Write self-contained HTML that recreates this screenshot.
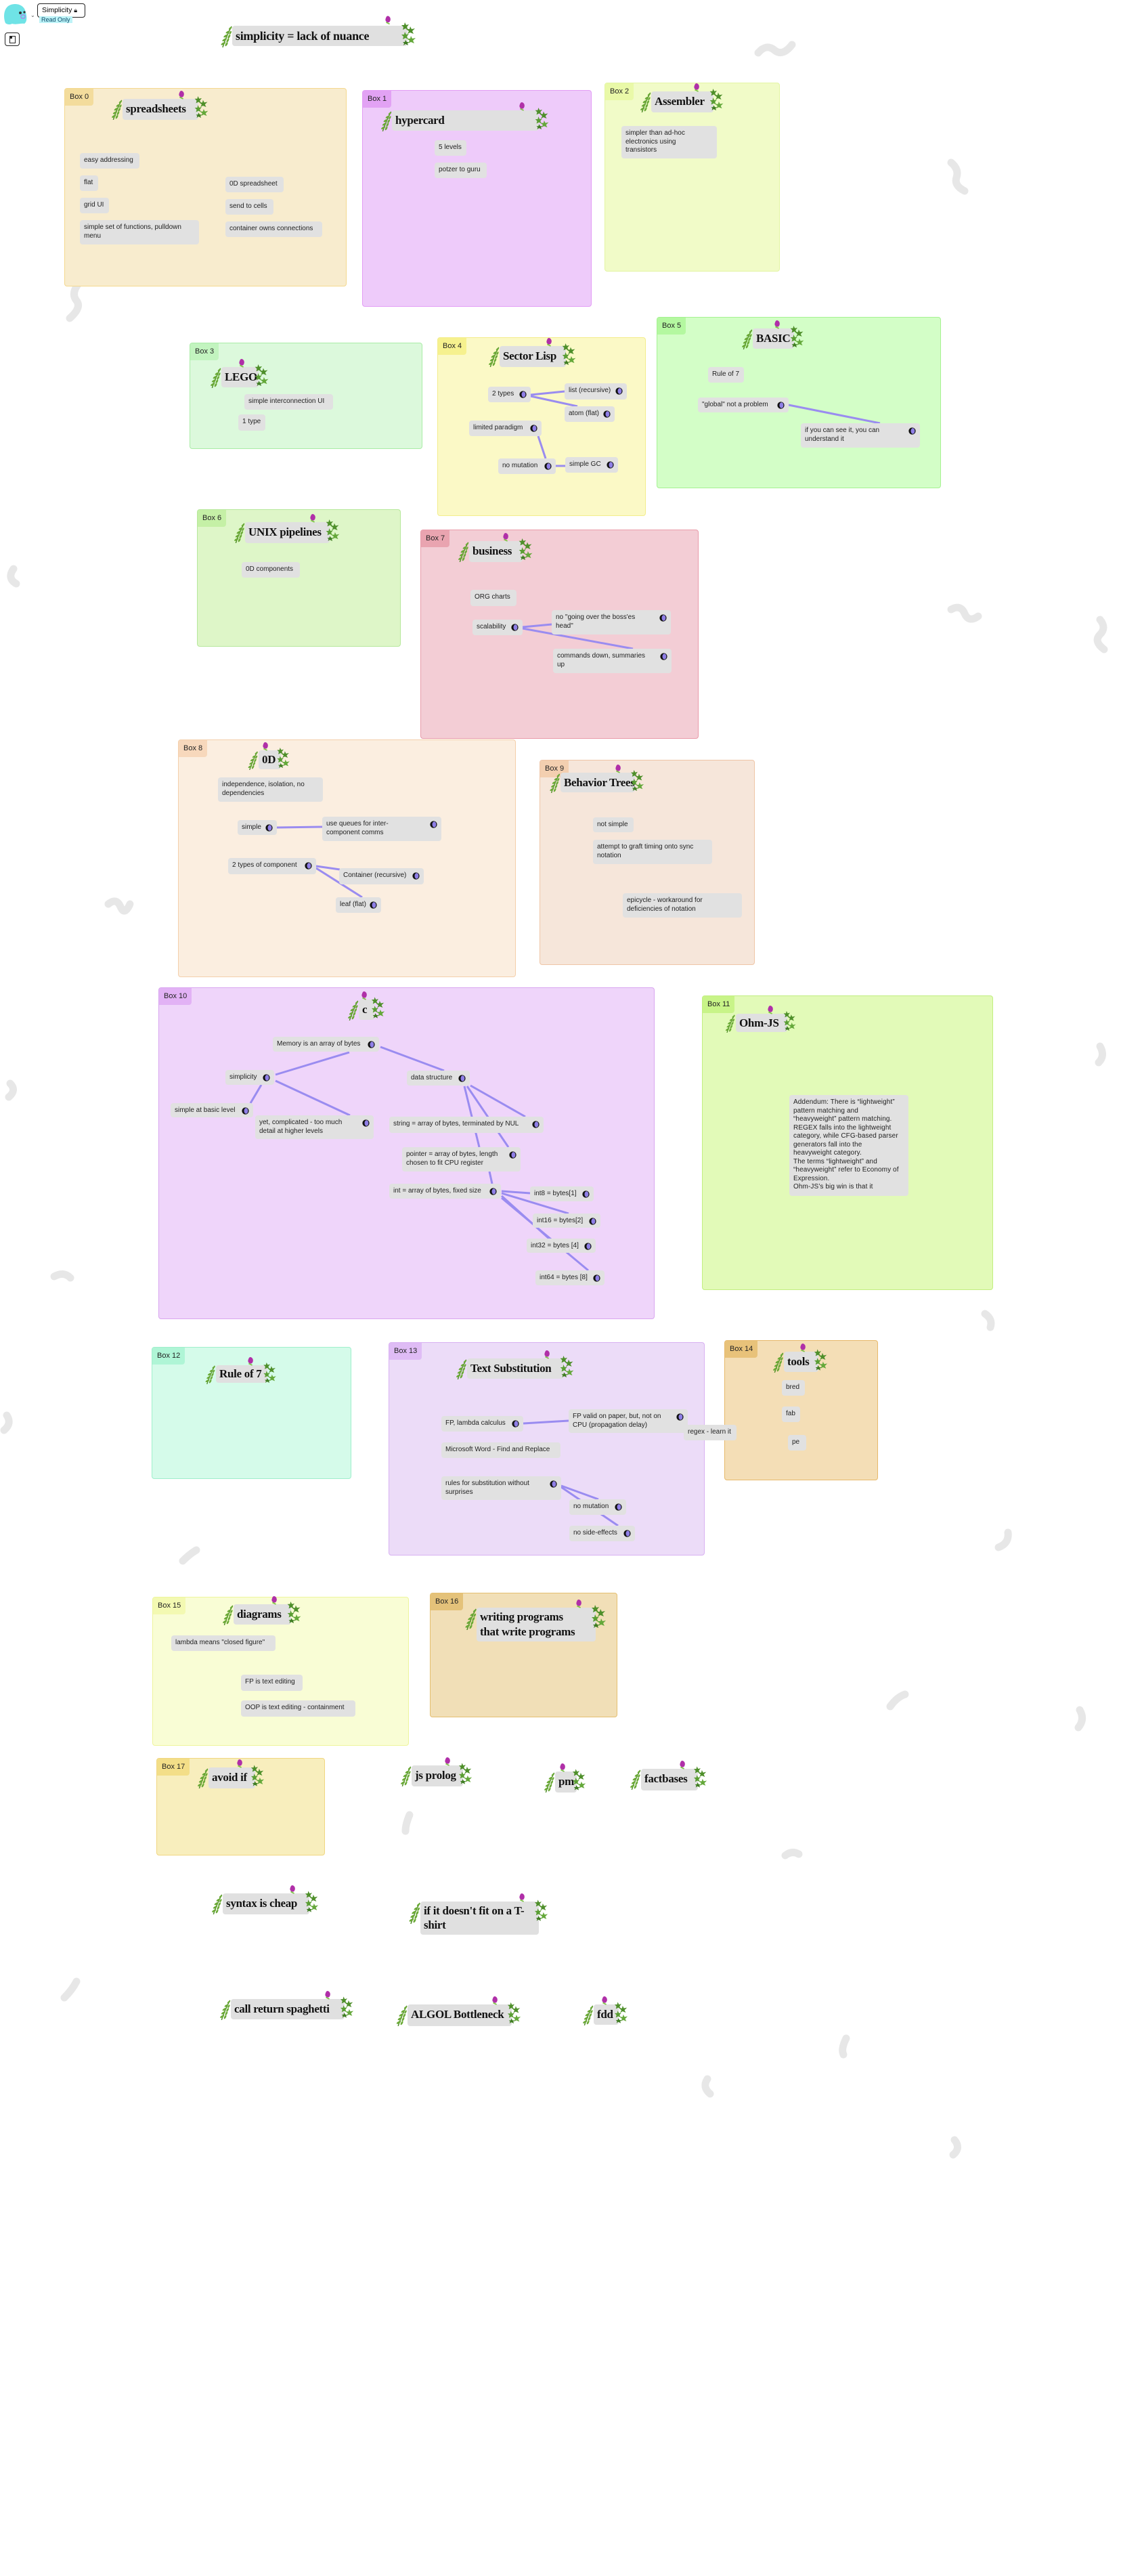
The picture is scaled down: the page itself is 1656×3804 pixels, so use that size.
<!DOCTYPE html>
<html><head><meta charset="utf-8">
<style>
html,body{margin:0;padding:0;background:#fff;}
body{width:1656px;height:3804px;position:relative;overflow:hidden;font-family:"Liberation Sans",sans-serif;}
.b{position:absolute;border:1.5px solid;border-radius:4px;box-sizing:border-box;}
.tab{position:absolute;left:0;top:0;font-size:11px;color:#222;padding:6px 7px;border-radius:3px 0 4px 0;height:25px;box-sizing:border-box;}
.t{position:absolute;background:#e0e0e0;border-radius:4px;font-family:"Liberation Serif",serif;font-weight:bold;font-size:17px;color:#111;padding:0 0 0 5px;box-sizing:border-box;white-space:nowrap;line-height:30px;letter-spacing:-0.3px;}
.t svg{position:absolute;overflow:visible;}
.n{position:absolute;background:#e1e1e1;border-radius:4px;font-size:10px;color:#222;padding:5px 6px;box-sizing:border-box;line-height:12.5px;white-space:nowrap;}
.n.ic{padding-right:20px;}
.n .i{position:absolute;right:6px;top:6px;width:11px;height:11px;}
.ln{position:absolute;left:0;top:0;}
</style></head><body>
<svg width="0" height="0" style="position:absolute">
<defs>
<symbol id="fern" viewBox="0 0 20 34">
<path d="M3 34 Q8 18 17 1" stroke="#4f8d27" stroke-width="1.6" fill="none"/>
<g fill="#6aa935">
<ellipse cx="4" cy="28" rx="4" ry="1.6" transform="rotate(-30 4 28)"/><ellipse cx="9" cy="29" rx="3.5" ry="1.5" transform="rotate(-60 9 29)"/>
<ellipse cx="6" cy="22" rx="4" ry="1.6" transform="rotate(-30 6 22)"/><ellipse cx="11" cy="23" rx="3.5" ry="1.5" transform="rotate(-60 11 23)"/>
<ellipse cx="8" cy="16" rx="4" ry="1.6" transform="rotate(-30 8 16)"/><ellipse cx="13" cy="17" rx="3.5" ry="1.5" transform="rotate(-60 13 17)"/>
<ellipse cx="11" cy="10" rx="3.5" ry="1.5" transform="rotate(-30 11 10)"/><ellipse cx="15" cy="11" rx="3" ry="1.4" transform="rotate(-60 15 11)"/>
<ellipse cx="15" cy="4" rx="3" ry="1.4" transform="rotate(-40 15 4)"/>
</g></symbol>
<symbol id="ivy" viewBox="0 0 24 34">
<g fill="#4e8f2a">
<polygon points="6,0 8,4 12,3 9,7 11,11 7,9 3,11 4,7 1,4 5,4"/>
<polygon points="14,6 16,10 21,9 17,13 19,17 14,15 10,17 12,13 8,10 13,10"/>
<polygon points="6,14 8,18 12,17 9,21 11,25 7,23 3,25 4,21 1,18 5,18" fill="#5a9e33"/>
<polygon points="15,20 17,24 22,23 18,27 20,31 15,29 11,31 13,27 9,24 14,24" fill="#64a83a"/>
<polygon points="7,26 9,29 12,29 10,31 11,34 7,32 4,34 5,31 3,29 6,29" fill="#3f7d22"/>
</g></symbol>
<symbol id="fl" viewBox="0 0 14 16">
<path d="M7 1 C12 2 13 9 9 12 C5 13 2 10 3 6 C4 3 5 1 7 1Z" fill="#b02fa8"/>
<path d="M4 12 L10 15" stroke="#7cc444" stroke-width="2"/>
</symbol>
<symbol id="ico" viewBox="0 0 12 12">
<circle cx="6" cy="6" r="5.6" fill="#111"/><ellipse cx="7" cy="6" rx="3.2" ry="4.6" fill="#8f7fe6"/>
</symbol>
</defs></svg>

<!-- background squiggles -->
<svg class="ln" width="1656" height="3804" style="opacity:.7">
<g stroke="#dedede" stroke-width="11" fill="none" stroke-linecap="round">
<path d="M1120 78 q12 -14 24 -4 t26 -8"/>
<path d="M115 420 q-10 14 -2 24 t-10 26"/>
<path d="M125 150 q15 -8 22 4 t20 -6"/>
<path d="M1405 240 q12 10 8 22 t12 20"/>
<path d="M20 840 q-10 14 4 22"/>
<path d="M1405 900 q14 -8 20 6 t20 4"/>
<path d="M1625 915 q10 12 0 22 t6 22"/>
<path d="M1040 1140 q14 -10 26 -2 t24 -6"/>
<path d="M160 1335 q12 -10 18 4 t14 -4"/>
<path d="M700 1690 q-6 12 6 22"/>
<path d="M1625 1545 q8 14 -2 24"/>
<path d="M15 1600 q10 10 -2 20"/>
<path d="M80 1885 q14 -8 24 2"/>
<path d="M1455 1940 q12 8 8 20"/>
<path d="M10 2090 q8 12 -4 22"/>
<path d="M270 2305 q10 -10 20 -16"/>
<path d="M1475 2285 q16 -6 14 -22"/>
<path d="M1315 2520 q10 -14 22 -18"/>
<path d="M1595 2525 q8 14 -2 26"/>
<path d="M605 2680 q-6 14 -6 24"/>
<path d="M95 2950 q12 -12 18 -24"/>
<path d="M1045 3070 q-8 12 4 22"/>
<path d="M1410 3160 q10 12 -2 22"/>
<path d="M1160 2740 q10 -8 20 -2"/>
<path d="M1250 3010 q-8 16 -4 24"/>
</g></svg>

<!-- header -->
<svg style="position:absolute;left:4px;top:4px" width="40" height="34" viewBox="0 0 40 34">
<path d="M4 30 C0 20 2 6 12 3 C22 0 32 4 34 14 C36 22 36 28 32 31 C26 30 20 33 14 31 C10 33 6 32 4 30Z" fill="#6fe3e6"/>
<circle cx="26" cy="15" r="2" fill="#333"/><circle cx="32" cy="14" r="1.6" fill="#333"/>
<rect x="27" y="18" width="6" height="5" rx="2" fill="none" stroke="#b07be8" stroke-width="1.2"/>
</svg>
<div style="position:absolute;left:45px;top:18px;font-size:8px;color:#555">⌄</div>
<div style="position:absolute;left:55px;top:5px;width:71px;height:21px;border:1px solid #222;border-radius:4px;box-sizing:border-box;font-size:10.5px;padding:3px 0 0 6px;">Simplicity <span style="font-size:9px">&#x1F512;&#xFE0E;</span></div>
<div style="position:absolute;left:58px;top:24px;background:#bdf3f7;font-size:9px;padding:0 3px;color:#0a4a6a;line-height:10px">Read Only</div>
<div style="position:absolute;left:7px;top:48px;width:22px;height:20px;border:1px solid #222;border-radius:4px;box-sizing:border-box;"><div style="position:absolute;left:6px;top:4px;width:7px;height:9px;border:1px solid #222"></div><div style="position:absolute;left:7px;top:5px;width:3px;height:3px;background:#222"></div></div>

<!-- boxes -->
<div class="b" style="left:95px;top:130px;width:417px;height:293px;background:#f8ecce;border-color:#f4d88e"><div class="tab" style="background:#f3dc9c">Box 0</div></div>
<div class="b" style="left:535px;top:133px;width:339px;height:320px;background:#eecbfa;border-color:#e29cf5"><div class="tab" style="background:#e2a2f4">Box 1</div></div>
<div class="b" style="left:893px;top:122px;width:259px;height:279px;background:#f1fbc8;border-color:#e3f5a2"><div class="tab" style="background:#e9f9a8">Box 2</div></div>
<div class="b" style="left:280px;top:506px;width:344px;height:157px;background:#dcf9dc;border-color:#a9eca6"><div class="tab" style="background:#c2f4bf">Box 3</div></div>
<div class="b" style="left:646px;top:498px;width:308px;height:264px;background:#fbf9c6;border-color:#f3ed8c"><div class="tab" style="background:#f6f18e">Box 4</div></div>
<div class="b" style="left:970px;top:468px;width:420px;height:253px;background:#d3fec7;border-color:#a5f291"><div class="tab" style="background:#b4f8a0">Box 5</div></div>
<div class="b" style="left:291px;top:752px;width:301px;height:203px;background:#def6c8;border-color:#b6e89b"><div class="tab" style="background:#c5f0a6">Box 6</div></div>
<div class="b" style="left:621px;top:782px;width:411px;height:309px;background:#f3cdd5;border-color:#e99ba9"><div class="tab" style="background:#e9a4b0">Box 7</div></div>
<div class="b" style="left:263px;top:1092px;width:499px;height:351px;background:#fbeee0;border-color:#f4cfaa"><div class="tab" style="background:#f7d8bc">Box 8</div></div>
<div class="b" style="left:797px;top:1122px;width:318px;height:303px;background:#f6e6da;border-color:#efc5a6"><div class="tab" style="background:#f3cfb0">Box 9</div></div>
<div class="b" style="left:234px;top:1458px;width:733px;height:490px;background:#efd5fa;border-color:#d9a6f0"><div class="tab" style="background:#e2b2f5">Box 10</div></div>
<div class="b" style="left:1037px;top:1470px;width:430px;height:435px;background:#e2fab8;border-color:#c2ee80"><div class="tab" style="background:#c8f488">Box 11</div></div>
<div class="b" style="left:224px;top:1989px;width:295px;height:195px;background:#d5fbea;border-color:#9fefcc"><div class="tab" style="background:#aff5d6">Box 12</div></div>
<div class="b" style="left:574px;top:1982px;width:467px;height:315px;background:#ecdcf8;border-color:#d8b0f2"><div class="tab" style="background:#dfbcf5">Box 13</div></div>
<div class="b" style="left:1070px;top:1979px;width:227px;height:207px;background:#f4deb6;border-color:#e7b96b"><div class="tab" style="background:#e8c27a">Box 14</div></div>
<div class="b" style="left:225px;top:2358px;width:379px;height:220px;background:#f9fdd5;border-color:#eef59c"><div class="tab" style="background:#f3f9b2">Box 15</div></div>
<div class="b" style="left:635px;top:2352px;width:277px;height:184px;background:#f1dfb7;border-color:#e4bf70"><div class="tab" style="background:#e4c27a">Box 16</div></div>
<div class="b" style="left:231px;top:2596px;width:249px;height:144px;background:#f8eebd;border-color:#f0d680"><div class="tab" style="background:#f3de88">Box 17</div></div>

<!-- connectors -->
<svg class="ln" width="1656" height="3804">
<g stroke="#9a8cf0" stroke-width="3" fill="none">
<line x1="784" y1="583" x2="834" y2="578"/><line x1="784" y1="585" x2="853" y2="600"/>
<line x1="795" y1="644" x2="806" y2="677"/><line x1="821" y1="688" x2="835" y2="688"/>
<line x1="1165" y1="598" x2="1300" y2="625"/>
<line x1="772" y1="926" x2="815" y2="922"/><line x1="772" y1="928" x2="935" y2="958"/>
<line x1="409" y1="1222" x2="476" y2="1221"/><line x1="467" y1="1279" x2="502" y2="1284"/><line x1="467" y1="1282" x2="535" y2="1325"/>
<line x1="516" y1="1554" x2="407" y2="1587"/><line x1="562" y1="1546" x2="656" y2="1581"/>
<line x1="386" y1="1602" x2="370" y2="1629"/><line x1="407" y1="1596" x2="517" y2="1647"/>
<line x1="695" y1="1603" x2="776" y2="1649"/><line x1="690" y1="1604" x2="751" y2="1694"/><line x1="686" y1="1604" x2="708" y2="1694"/>
<line x1="723" y1="1730" x2="727" y2="1748"/>
<line x1="741" y1="1759" x2="783" y2="1762"/><line x1="741" y1="1762" x2="840" y2="1792"/>
<line x1="741" y1="1766" x2="811" y2="1829"/><line x1="741" y1="1769" x2="869" y2="1876"/>
<line x1="773" y1="2102" x2="840" y2="2098"/><line x1="829" y1="2194" x2="884" y2="2214"/><line x1="829" y1="2196" x2="913" y2="2253"/>
</g></svg>

<!-- titles -->
<div class="t" style="left:343px;top:38px;width:259px;height:30px;font-size:18px">simplicity = lack of nuance<svg style="left:-17px;top:0" width="19" height="32"><use href="#fern"/></svg><svg style="left:249px;top:-5px" width="24" height="34"><use href="#ivy"/></svg><svg style="left:224px;top:-16px" width="12" height="15"><use href="#fl"/></svg></div>
<div class="t" style="left:181px;top:146px;width:112px;height:31px">spreadsheets<svg style="left:-17px;top:1px" width="19" height="30"><use href="#fern"/></svg><svg style="left:105px;top:-4px" width="24" height="32"><use href="#ivy"/></svg><svg style="left:81px;top:-13px" width="12" height="14"><use href="#fl"/></svg></div>
<div class="t" style="left:579px;top:163px;width:217px;height:30px">hypercard<svg style="left:-17px;top:1px" width="19" height="30"><use href="#fern"/></svg><svg style="left:210px;top:-4px" width="24" height="32"><use href="#ivy"/></svg><svg style="left:186px;top:-13px" width="12" height="14"><use href="#fl"/></svg></div>
<div class="t" style="left:962px;top:135px;width:92px;height:31px">Assembler<svg style="left:-17px;top:1px" width="19" height="30"><use href="#fern"/></svg><svg style="left:85px;top:-4px" width="24" height="32"><use href="#ivy"/></svg><svg style="left:61px;top:-13px" width="12" height="14"><use href="#fl"/></svg></div>
<div class="t" style="left:327px;top:542px;width:55px;height:30px">LEGO<svg style="left:-17px;top:1px" width="19" height="30"><use href="#fern"/></svg><svg style="left:48px;top:-4px" width="24" height="32"><use href="#ivy"/></svg><svg style="left:24px;top:-13px" width="12" height="14"><use href="#fl"/></svg></div>
<div class="t" style="left:738px;top:511px;width:98px;height:31px">Sector Lisp<svg style="left:-17px;top:1px" width="19" height="30"><use href="#fern"/></svg><svg style="left:91px;top:-4px" width="24" height="32"><use href="#ivy"/></svg><svg style="left:67px;top:-13px" width="12" height="14"><use href="#fl"/></svg></div>
<div class="t" style="left:1112px;top:485px;width:61px;height:30px">BASIC<svg style="left:-17px;top:1px" width="19" height="30"><use href="#fern"/></svg><svg style="left:54px;top:-4px" width="24" height="32"><use href="#ivy"/></svg><svg style="left:30px;top:-13px" width="12" height="14"><use href="#fl"/></svg></div>
<div class="t" style="left:362px;top:771px;width:125px;height:31px">UNIX pipelines<svg style="left:-17px;top:1px" width="19" height="30"><use href="#fern"/></svg><svg style="left:118px;top:-4px" width="24" height="32"><use href="#ivy"/></svg><svg style="left:94px;top:-13px" width="12" height="14"><use href="#fl"/></svg></div>
<div class="t" style="left:693px;top:799px;width:79px;height:31px">business<svg style="left:-17px;top:1px" width="19" height="30"><use href="#fern"/></svg><svg style="left:72px;top:-4px" width="24" height="32"><use href="#ivy"/></svg><svg style="left:48px;top:-13px" width="12" height="14"><use href="#fl"/></svg></div>
<div class="t" style="left:382px;top:1108px;width:33px;height:28px;line-height:28px">0D<svg style="left:-17px;top:1px" width="19" height="28"><use href="#fern"/></svg><svg style="left:26px;top:-4px" width="22" height="30"><use href="#ivy"/></svg><svg style="left:4px;top:-13px" width="12" height="14"><use href="#fl"/></svg></div>
<div class="t" style="left:828px;top:1141px;width:110px;height:29px;line-height:29px">Behavior Trees<svg style="left:-17px;top:1px" width="19" height="29"><use href="#fern"/></svg><svg style="left:103px;top:-4px" width="22" height="31"><use href="#ivy"/></svg><svg style="left:79px;top:-13px" width="12" height="14"><use href="#fl"/></svg></div>
<div class="t" style="left:530px;top:1476px;width:23px;height:30px">c<svg style="left:-17px;top:1px" width="19" height="30"><use href="#fern"/></svg><svg style="left:18px;top:-4px" width="22" height="32"><use href="#ivy"/></svg><svg style="left:2px;top:-13px" width="12" height="14"><use href="#fl"/></svg></div>
<div class="t" style="left:1087px;top:1497px;width:76px;height:27px;line-height:27px">Ohm-JS<svg style="left:-17px;top:1px" width="19" height="27"><use href="#fern"/></svg><svg style="left:69px;top:-4px" width="22" height="29"><use href="#ivy"/></svg><svg style="left:45px;top:-13px" width="12" height="14"><use href="#fl"/></svg></div>
<div class="t" style="left:319px;top:2016px;width:76px;height:26px;line-height:26px">Rule of 7<svg style="left:-17px;top:0" width="19" height="28"><use href="#fern"/></svg><svg style="left:69px;top:-4px" width="22" height="30"><use href="#ivy"/></svg><svg style="left:45px;top:-13px" width="12" height="14"><use href="#fl"/></svg></div>
<div class="t" style="left:690px;top:2006px;width:143px;height:30px">Text Substitution<svg style="left:-17px;top:1px" width="19" height="30"><use href="#fern"/></svg><svg style="left:136px;top:-4px" width="24" height="32"><use href="#ivy"/></svg><svg style="left:112px;top:-13px" width="12" height="14"><use href="#fl"/></svg></div>
<div class="t" style="left:1158px;top:1996px;width:51px;height:30px">tools<svg style="left:-17px;top:1px" width="19" height="30"><use href="#fern"/></svg><svg style="left:44px;top:-4px" width="22" height="32"><use href="#ivy"/></svg><svg style="left:22px;top:-13px" width="12" height="14"><use href="#fl"/></svg></div>
<div class="t" style="left:345px;top:2369px;width:85px;height:30px">diagrams<svg style="left:-17px;top:1px" width="19" height="30"><use href="#fern"/></svg><svg style="left:78px;top:-4px" width="24" height="32"><use href="#ivy"/></svg><svg style="left:54px;top:-13px" width="12" height="14"><use href="#fl"/></svg></div>
<div class="t" style="left:704px;top:2374px;width:176px;height:50px;line-height:22px;padding-top:3px">writing programs<br>that write programs<svg style="left:-17px;top:1px" width="19" height="32"><use href="#fern"/></svg><svg style="left:169px;top:-4px" width="24" height="34"><use href="#ivy"/></svg><svg style="left:145px;top:-13px" width="12" height="14"><use href="#fl"/></svg></div>
<div class="t" style="left:308px;top:2610px;width:69px;height:31px">avoid if<svg style="left:-17px;top:1px" width="19" height="30"><use href="#fern"/></svg><svg style="left:62px;top:-4px" width="22" height="32"><use href="#ivy"/></svg><svg style="left:40px;top:-13px" width="12" height="14"><use href="#fl"/></svg></div>
<div class="t" style="left:608px;top:2607px;width:76px;height:31px">js prolog<svg style="left:-17px;top:1px" width="19" height="30"><use href="#fern"/></svg><svg style="left:69px;top:-4px" width="22" height="32"><use href="#ivy"/></svg><svg style="left:47px;top:-13px" width="12" height="14"><use href="#fl"/></svg></div>
<div class="t" style="left:820px;top:2616px;width:32px;height:31px">pm<svg style="left:-17px;top:1px" width="19" height="30"><use href="#fern"/></svg><svg style="left:25px;top:-4px" width="22" height="32"><use href="#ivy"/></svg><svg style="left:5px;top:-13px" width="12" height="14"><use href="#fl"/></svg></div>
<div class="t" style="left:947px;top:2612px;width:84px;height:32px">factbases<svg style="left:-17px;top:1px" width="19" height="30"><use href="#fern"/></svg><svg style="left:77px;top:-4px" width="22" height="32"><use href="#ivy"/></svg><svg style="left:55px;top:-13px" width="12" height="14"><use href="#fl"/></svg></div>
<div class="t" style="left:329px;top:2796px;width:128px;height:31px">syntax is cheap<svg style="left:-17px;top:1px" width="19" height="30"><use href="#fern"/></svg><svg style="left:121px;top:-4px" width="22" height="32"><use href="#ivy"/></svg><svg style="left:97px;top:-13px" width="12" height="14"><use href="#fl"/></svg></div>
<div class="t" style="left:621px;top:2808px;width:175px;height:49px;line-height:21px;padding-top:3px">if it doesn't fit on a T-<br>shirt<svg style="left:-17px;top:1px" width="19" height="32"><use href="#fern"/></svg><svg style="left:168px;top:-4px" width="22" height="34"><use href="#ivy"/></svg><svg style="left:144px;top:-13px" width="12" height="14"><use href="#fl"/></svg></div>
<div class="t" style="left:341px;top:2952px;width:168px;height:30px">call return spaghetti<svg style="left:-17px;top:1px" width="19" height="30"><use href="#fern"/></svg><svg style="left:161px;top:-4px" width="22" height="32"><use href="#ivy"/></svg><svg style="left:137px;top:-13px" width="12" height="14"><use href="#fl"/></svg></div>
<div class="t" style="left:602px;top:2960px;width:154px;height:32px">ALGOL Bottleneck<svg style="left:-17px;top:1px" width="19" height="31"><use href="#fern"/></svg><svg style="left:147px;top:-4px" width="22" height="33"><use href="#ivy"/></svg><svg style="left:123px;top:-13px" width="12" height="14"><use href="#fl"/></svg></div>
<div class="t" style="left:877px;top:2960px;width:37px;height:30px">fdd<svg style="left:-17px;top:1px" width="19" height="30"><use href="#fern"/></svg><svg style="left:30px;top:-4px" width="22" height="32"><use href="#ivy"/></svg><svg style="left:10px;top:-13px" width="12" height="14"><use href="#fl"/></svg></div>

<!-- notes -->
<div class="n" style="left:118px;top:226px;width:88px;height:23px">easy addressing</div>
<div class="n" style="left:118px;top:259px;width:27px;height:23px">flat</div>
<div class="n" style="left:118px;top:292px;width:43px;height:23px">grid UI</div>
<div class="n" style="left:118px;top:325px;width:176px;height:36px">simple set of functions, pulldown<br>menu</div>
<div class="n" style="left:333px;top:261px;width:86px;height:23px">0D spreadsheet</div>
<div class="n" style="left:333px;top:294px;width:71px;height:23px">send to cells</div>
<div class="n" style="left:333px;top:327px;width:143px;height:23px">container owns connections</div>
<div class="n" style="left:642px;top:207px;width:47px;height:23px">5 levels</div>
<div class="n" style="left:642px;top:240px;width:77px;height:23px">potzer to guru</div>
<div class="n" style="left:918px;top:186px;width:141px;height:48px">simpler than ad-hoc<br>electronics using<br>transistors</div>
<div class="n" style="left:361px;top:582px;width:131px;height:23px">simple interconnection UI</div>
<div class="n" style="left:352px;top:612px;width:40px;height:24px">1 type</div>
<div class="n ic" style="left:721px;top:571px;width:63px;height:23px">2 types<svg class="i"><use href="#ico"/></svg></div>
<div class="n ic" style="left:834px;top:566px;width:92px;height:24px">list (recursive)<svg class="i"><use href="#ico"/></svg></div>
<div class="n ic" style="left:834px;top:600px;width:74px;height:23px">atom (flat)<svg class="i"><use href="#ico"/></svg></div>
<div class="n ic" style="left:693px;top:621px;width:107px;height:23px">limited paradigm<svg class="i"><use href="#ico"/></svg></div>
<div class="n ic" style="left:736px;top:677px;width:85px;height:23px">no mutation<svg class="i"><use href="#ico"/></svg></div>
<div class="n ic" style="left:835px;top:675px;width:78px;height:23px">simple GC<svg class="i"><use href="#ico"/></svg></div>
<div class="n" style="left:1046px;top:542px;width:53px;height:23px">Rule of 7</div>
<div class="n ic" style="left:1031px;top:587px;width:134px;height:22px">"global" not a problem<svg class="i"><use href="#ico"/></svg></div>
<div class="n ic" style="left:1183px;top:625px;width:176px;height:36px">if you can see it, you can<br>understand it<svg class="i"><use href="#ico"/></svg></div>
<div class="n" style="left:357px;top:830px;width:86px;height:23px">0D components</div>
<div class="n" style="left:695px;top:871px;width:68px;height:24px">ORG charts</div>
<div class="n ic" style="left:698px;top:915px;width:74px;height:23px">scalability<svg class="i"><use href="#ico"/></svg></div>
<div class="n ic" style="left:815px;top:901px;width:176px;height:36px">no "going over the boss'es<br>head"<svg class="i"><use href="#ico"/></svg></div>
<div class="n ic" style="left:817px;top:958px;width:175px;height:36px">commands down, summaries<br>up<svg class="i"><use href="#ico"/></svg></div>
<div class="n" style="left:322px;top:1148px;width:155px;height:36px">independence, isolation, no<br>dependencies</div>
<div class="n ic" style="left:351px;top:1211px;width:58px;height:22px">simple<svg class="i"><use href="#ico"/></svg></div>
<div class="n ic" style="left:476px;top:1206px;width:176px;height:36px">use queues for inter-<br>component comms<svg class="i"><use href="#ico"/></svg></div>
<div class="n ic" style="left:337px;top:1267px;width:130px;height:24px">2 types of component<svg class="i"><use href="#ico"/></svg></div>
<div class="n ic" style="left:501px;top:1282px;width:125px;height:24px">Container (recursive)<svg class="i"><use href="#ico"/></svg></div>
<div class="n ic" style="left:496px;top:1325px;width:67px;height:23px">leaf (flat)<svg class="i"><use href="#ico"/></svg></div>
<div class="n" style="left:876px;top:1207px;width:60px;height:22px">not simple</div>
<div class="n" style="left:876px;top:1240px;width:176px;height:36px">attempt to graft timing onto sync<br>notation</div>
<div class="n" style="left:920px;top:1319px;width:176px;height:36px">epicycle - workaround for<br>deficiencies of notation</div>
<div class="n ic" style="left:403px;top:1531px;width:157px;height:22px">Memory is an array of bytes<svg class="i"><use href="#ico"/></svg></div>
<div class="n ic" style="left:333px;top:1580px;width:72px;height:22px">simplicity<svg class="i"><use href="#ico"/></svg></div>
<div class="n ic" style="left:601px;top:1581px;width:93px;height:22px">data structure<svg class="i"><use href="#ico"/></svg></div>
<div class="n ic" style="left:252px;top:1629px;width:122px;height:21px">simple at basic level<svg class="i"><use href="#ico"/></svg></div>
<div class="n ic" style="left:377px;top:1647px;width:175px;height:35px">yet, complicated - too much<br>detail at higher levels<svg class="i"><use href="#ico"/></svg></div>
<div class="n ic" style="left:575px;top:1649px;width:228px;height:24px">string = array of bytes, terminated by NUL<svg class="i"><use href="#ico"/></svg></div>
<div class="n ic" style="left:594px;top:1694px;width:175px;height:36px">pointer = array of bytes, length<br>chosen to fit CPU register<svg class="i"><use href="#ico"/></svg></div>
<div class="n ic" style="left:575px;top:1748px;width:165px;height:22px">int = array of bytes, fixed size<svg class="i"><use href="#ico"/></svg></div>
<div class="n ic" style="left:783px;top:1752px;width:94px;height:22px">int8 = bytes[1]<svg class="i"><use href="#ico"/></svg></div>
<div class="n ic" style="left:787px;top:1792px;width:100px;height:21px">int16 = bytes[2]<svg class="i"><use href="#ico"/></svg></div>
<div class="n ic" style="left:778px;top:1829px;width:102px;height:21px">int32 = bytes [4]<svg class="i"><use href="#ico"/></svg></div>
<div class="n ic" style="left:791px;top:1876px;width:102px;height:22px">int64 = bytes [8]<svg class="i"><use href="#ico"/></svg></div>
<div class="n" style="left:1166px;top:1617px;width:176px;height:149px;font-size:10px;line-height:12.5px;letter-spacing:0.1px">Addendum: There is “lightweight”<br>pattern matching and<br>“heavyweight” pattern matching.<br>REGEX falls into the lightweight<br>category, while CFG-based parser<br>generators fall into the<br>heavyweight category.<br>The terms “lightweight” and<br>“heavyweight” refer to Economy of<br>Expression.<br>Ohm-JS’s big win is that it</div>
<div class="n ic" style="left:652px;top:2091px;width:121px;height:23px">FP, lambda calculus<svg class="i"><use href="#ico"/></svg></div>
<div class="n ic" style="left:840px;top:2081px;width:176px;height:35px">FP valid on paper, but, not on<br>CPU (propagation delay)<svg class="i"><use href="#ico"/></svg></div>
<div class="n" style="left:1010px;top:2104px;width:78px;height:23px">regex - learn it</div>
<div class="n" style="left:652px;top:2130px;width:176px;height:23px">Microsoft Word - Find and Replace</div>
<div class="n ic" style="left:652px;top:2180px;width:177px;height:35px">rules for substitution without<br>surprises<svg class="i"><use href="#ico"/></svg></div>
<div class="n ic" style="left:841px;top:2214px;width:84px;height:23px">no mutation<svg class="i"><use href="#ico"/></svg></div>
<div class="n ic" style="left:841px;top:2253px;width:97px;height:23px">no side-effects<svg class="i"><use href="#ico"/></svg></div>
<div class="n" style="left:1155px;top:2038px;width:34px;height:23px">bred</div>
<div class="n" style="left:1155px;top:2077px;width:27px;height:23px">fab</div>
<div class="n" style="left:1164px;top:2119px;width:27px;height:23px">pe</div>
<div class="n" style="left:253px;top:2415px;width:154px;height:23px">lambda means "closed figure"</div>
<div class="n" style="left:356px;top:2473px;width:91px;height:24px">FP is text editing</div>
<div class="n" style="left:356px;top:2511px;width:169px;height:24px">OOP is text editing - containment</div>
</body></html>
